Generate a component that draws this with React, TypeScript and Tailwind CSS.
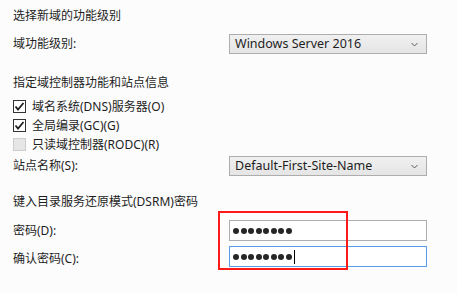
import React from "react";

const font = { fontFamily: '"Noto Sans", "Noto Sans CJK SC", sans-serif' };

function Chevron() {
  return (
    <svg width="7" height="5" viewBox="0 0 7 5" className="shrink-0">
      <polyline points="0.5,1 3.5,4 6.5,1" fill="none" stroke="#5a5a5a" strokeWidth="1" />
    </svg>
  );
}

function Select({ value }: { value: string }) {
  return (
    <div className="flex h-[20px] w-[198px] items-center justify-between border border-[#adadad] bg-gradient-to-b from-[#f0f0f0] to-[#e5e5e5] pl-[5px] pr-[8px] text-[12.5px] text-[#1e1e1e]">
      <span className="leading-none">{value}</span>
      <Chevron />
    </div>
  );
}

function Checkbox({ label, checked, disabled }: { label: string; checked?: boolean; disabled?: boolean }) {
  return (
    <div className="flex h-[19px] items-center gap-[6px]">
      <span
        className={
          disabled
            ? "flex h-[13px] w-[13px] items-center justify-center border border-[#cccccc] bg-[#e6e6e6]"
            : "flex h-[13px] w-[13px] items-center justify-center border border-[#333333] bg-white"
        }
      >
        {checked && (
          <svg width="11" height="11" viewBox="0 0 11 11">
            <polyline points="1.5,5.5 4,8.5 9.5,2" fill="none" stroke="#1e1e1e" strokeWidth="1.8" />
          </svg>
        )}
      </span>
      <span className="text-[12px] text-[#1e1e1e]">{label}</span>
    </div>
  );
}

function PasswordField({ focused }: { focused?: boolean }) {
  return (
    <div
      className={
        focused
          ? "flex h-[21px] w-[198px] items-center border border-[#569de5] bg-white pl-[3px]"
          : "flex h-[21px] w-[198px] items-center border border-[#adadad] bg-white pl-[3px]"
      }
    >
      <div className="flex gap-[1.5px]">
        {Array.from({ length: 8 }).map((_, i) => (
          <span key={i} className="h-[6px] w-[6px] rounded-full bg-[#262626]" />
        ))}
      </div>
      {focused && <span className="ml-[2px] h-[14px] w-[1px] bg-black" />}
    </div>
  );
}

export default function App() {
  return (
    <div className="relative h-[293px] w-[457px] overflow-hidden bg-[#fcfcfc] pl-[13px] text-[12px] text-[#1e1e1e]" style={font}>
      <div className="flex h-[31px] items-center">选择新域的功能级别</div>
      <div className="flex h-[26px] items-center">
        <span className="w-[216px]">域功能级别:</span>
        <Select value="Windows Server 2016" />
      </div>

      <div className="mt-[14px] flex h-[24px] items-center">指定域控制器功能和站点信息</div>
      <div className="mt-[2px] flex flex-col">
        <Checkbox label="域名系统(DNS)服务器(O)" checked />
        <Checkbox label="全局编录(GC)(G)" checked />
        <Checkbox label="只读域控制器(RODC)(R)" disabled />
      </div>
      <div className="flex h-[24px] items-center">
        <span className="w-[216px]">站点名称(S):</span>
        <Select value="Default-First-Site-Name" />
      </div>

      <div className="mt-[12px] flex h-[24px] items-center">键入目录服务还原模式(DSRM)密码</div>
      <div className="mt-[6px] flex items-center">
        <span className="w-[216px]">密码(D):</span>
        <PasswordField />
      </div>
      <div className="mt-[5px] flex items-start">
        <span className="w-[216px] pt-[4px]">确认密码(C):</span>
        <PasswordField focused />
      </div>

      <div className="absolute left-[218px] top-[211px] h-[59px] w-[130px] border-2 border-[#ff1a1a]" />
    </div>
  );
}
